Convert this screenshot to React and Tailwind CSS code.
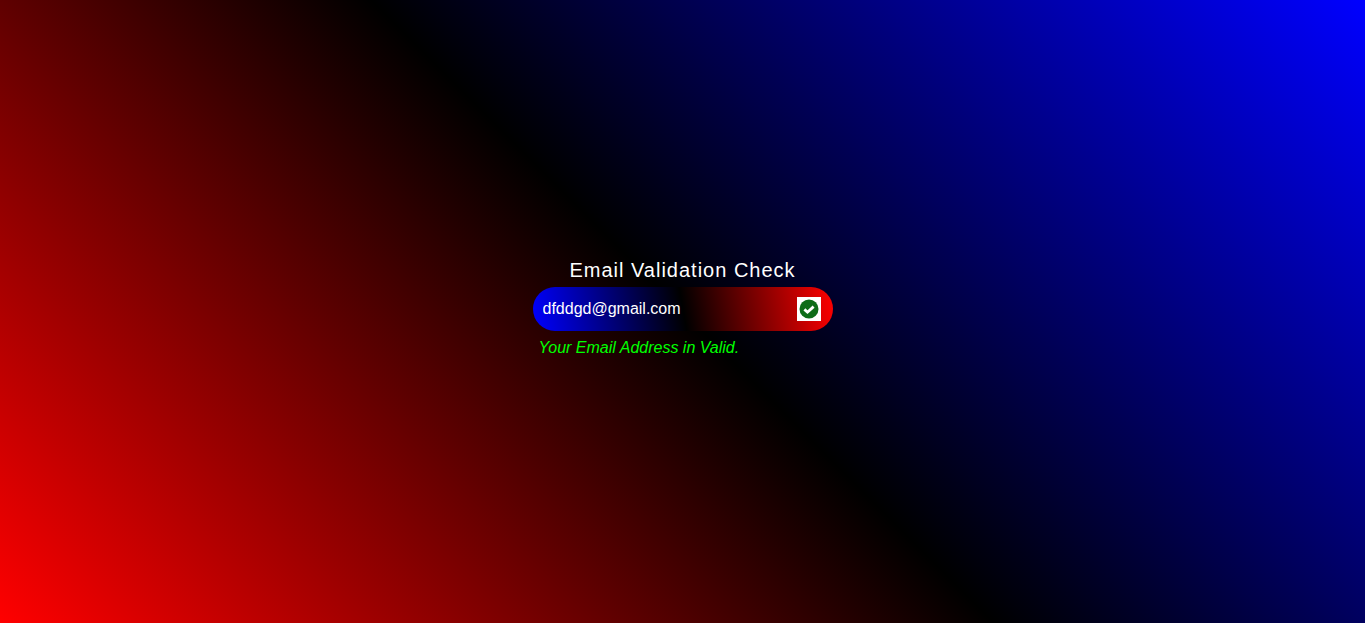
export default function App() {
  return (
    <div className="min-h-screen flex items-center justify-center bg-[linear-gradient(45deg,#f00,#000,#00f)] font-['Liberation_Sans',Arial,sans-serif]">
      <div className="w-[300px] pb-[7px]">
        <h1 className="text-center text-[20px] leading-[23px] tracking-[1px] text-white mb-[5px]">Email Validation Check</h1>
        <div className="flex items-center h-[44px] rounded-[22px] pl-[10px] pr-[12px] bg-[linear-gradient(80deg,#00f,#000,#f00)]">
          <input
            type="text"
            readOnly
            value="dfddgd@gmail.com"
            className="flex-1 min-w-0 bg-transparent outline-none text-white text-[16px]"
          />
          <span className="w-[24px] h-[24px] bg-white flex items-center justify-center shrink-0">
            <svg width="20" height="20" viewBox="0 0 20 20" className="blur-[0.4px]">
              <circle cx="10" cy="10" r="9.5" fill="#0e6c18" />
              <path d="M5.4 10.4 L8.5 13.2 L14.6 7.6" fill="none" stroke="#fff" strokeWidth="2.8" />
            </svg>
          </span>
        </div>
        <p className="mt-[8px] pl-[6px] text-[16px] leading-[18px] italic text-[#0f0]">Your Email Address in Valid.</p>
      </div>
    </div>
  );
}
